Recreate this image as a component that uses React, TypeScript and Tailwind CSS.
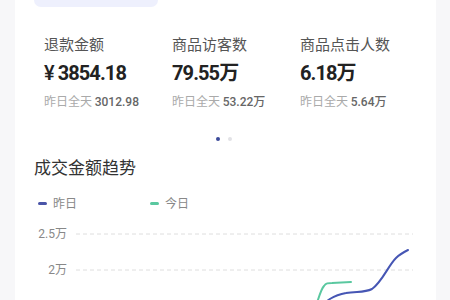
import React from 'react'

const cjk = { fontFamily: '"Noto Sans CJK SC", "Noto Sans", sans-serif' }
const num = { fontFamily: 'Roboto, "Noto Sans CJK SC", sans-serif' }

const stats = [
  { label: '退款金额', yen: true, value: '3854.18', prev: '3012.98' },
  { label: '商品访客数', yen: false, value: '79.55万', prev: '53.22万' },
  { label: '商品点击人数', yen: false, value: '6.18万', prev: '5.64万' },
]

const GridLine = () => (
  <svg className="block w-full h-[2px]" preserveAspectRatio="none">
    <line x1="0" y1="1" x2="100%" y2="1" stroke="#dedede" strokeWidth="1" strokeDasharray="4 3" />
  </svg>
)

export default function App() {
  return (
    <div className="w-[450px] h-[300px] overflow-hidden bg-[#f7f7f9]">
      <div className="ml-[15px] w-[421px] h-full bg-white pl-[19px] pr-[23px]">
        <div className="w-[124px] h-[7px] rounded-b-[10px] bg-[#eef0fd]" />

        <div className="grid grid-cols-[128px_128px_1fr] pl-[10px] pt-[27px]">
          {stats.map((s) => (
            <div key={s.label}>
              <div className="text-[15px] leading-[20px] text-[#555]" style={cjk}>
                {s.label}
              </div>
              <div className="mt-[7px] text-[20px] leading-[24px] font-bold text-[#222] tracking-[-0.9px]" style={num}>
                {s.yen && <span className="mr-[3px] font-medium tracking-normal">¥</span>}
                {s.value}
              </div>
              <div className="mt-[8px] text-[12px] leading-[16px] text-[#aaa]" style={cjk}>
                昨日全天 <span className="font-medium text-[#666]" style={num}>{s.prev}</span>
              </div>
            </div>
          ))}
        </div>

        <div className="flex justify-center gap-[8px] mt-[27px]">
          <span className="w-[4px] h-[4px] rounded-full bg-[#3b4a9a]" />
          <span className="w-[4px] h-[4px] rounded-full bg-[#e2e2e6]" />
        </div>

        <div className="mt-[14px] text-[17px] leading-[24px] text-[#333]" style={cjk}>
          成交金额趋势
        </div>

        <div className="flex mt-[16px] h-[16px] items-center text-[12px] leading-[16px] text-[#888]" style={cjk}>
          <div className="flex items-center w-[116px] pl-[4px]">
            <span className="w-[9px] h-[3px] rounded-full bg-[#4a55a8] mr-[6px]" />
            昨日
          </div>
          <div className="flex items-center">
            <span className="w-[9px] h-[3px] rounded-full bg-[#5ac8a0] mr-[6px]" />
            今日
          </div>
        </div>

        <div className="relative mt-[5px] h-[120px]">
          {['2.5万', '2万'].map((t) => (
            <div key={t} className="flex items-center h-[36px] gap-[9px]">
              <div className="w-[33px] text-right text-[12px] leading-[16px] text-[#888]" style={num}>
                {t}
              </div>
              <div className="flex-1">
                <GridLine />
              </div>
            </div>
          ))}
          <svg className="absolute left-0 top-0" width="379" height="120" fill="none">
            <path
              d="M279 100 C283 88, 286 74, 290 70 C292 67, 294 67, 298 67 L317 66"
              stroke="#5ac8a0"
              strokeWidth="2"
              strokeLinecap="round"
            />
            <path
              d="M282 96 C292 84, 300 79, 312 77 C322 75, 330 77, 338 73 C348 66, 354 50, 362 42 C366 38, 370 36, 374 34"
              stroke="#4656b4"
              strokeWidth="2"
              strokeLinecap="round"
            />
          </svg>
        </div>
      </div>
    </div>
  )
}
